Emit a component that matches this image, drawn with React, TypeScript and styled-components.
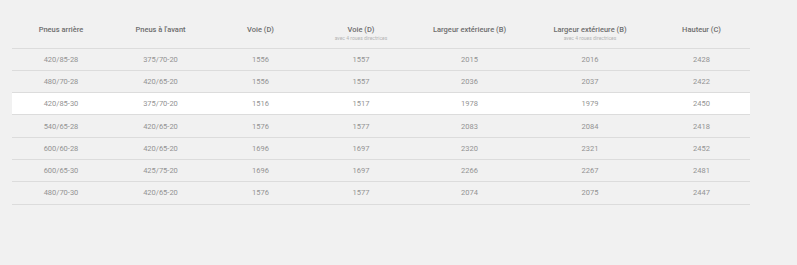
import styled, { createGlobalStyle } from "styled-components";

const GlobalStyle = createGlobalStyle`
  html, body {
    margin: 0;
    background: #f1f1f1;
    font-family: Roboto, "Liberation Sans", Arial, sans-serif;
  }
`;

type Row = string[];

const columns: { title: string; note?: string; width: number }[] = [
  { title: "Pneus arrière", width: 98 },
  { title: "Pneus à l'avant", width: 101 },
  { title: "Voie (D)", width: 99 },
  { title: "Voie (D)", note: "avec 4 roues directrices", width: 102 },
  { title: "Largeur extérieure (B)", width: 115 },
  { title: "Largeur extérieure (B)", note: "avec 4 roues directrices", width: 126 },
  { title: "Hauteur (C)", width: 97 },
];

const rows: Row[] = [
  ["420/85-28", "375/70-20", "1556", "1557", "2015", "2016", "2428"],
  ["480/70-28", "420/65-20", "1556", "1557", "2036", "2037", "2422"],
  ["420/85-30", "375/70-20", "1516", "1517", "1978", "1979", "2450"],
  ["540/65-28", "420/65-20", "1576", "1577", "2083", "2084", "2418"],
  ["600/60-28", "420/65-20", "1696", "1697", "2320", "2321", "2452"],
  ["600/65-30", "425/75-20", "1696", "1697", "2266", "2267", "2481"],
  ["480/70-30", "420/65-20", "1576", "1577", "2074", "2075", "2447"],
];

const App = () => {
  return (
    <>
      <GlobalStyle />
      <Page>
        <Table>
          <colgroup>
            {columns.map((c, i) => (
              <col key={i} style={{ width: c.width }} />
            ))}
          </colgroup>
          <thead>
            <tr>
              {columns.map((c, i) => (
                <Th key={i}>
                  {c.title}
                  {c.note && <Note>{c.note}</Note>}
                </Th>
              ))}
            </tr>
          </thead>
          <tbody>
            {rows.map((r, i) => (
              <Tr key={i} $active={i === 2}>
                {r.map((v, j) => (
                  <Td key={j}>{v}</Td>
                ))}
              </Tr>
            ))}
          </tbody>
        </Table>
      </Page>
    </>
  );
};

export default App;

const Page = styled.div`
  padding: 21px 12px 0 12px;
  height: 265px;
  box-sizing: border-box;
`;

const Table = styled.table`
  width: 738px;
  table-layout: fixed;
  border-collapse: collapse;
`;

const Th = styled.th`
  vertical-align: top;
  text-align: center;
  padding: 4px 0 0 0;
  height: 27px;
  font-size: 7.5px;
  font-weight: 500;
  color: #6e6e6e;
  border-bottom: 1px solid #dcdcdc;
  box-sizing: border-box;
`;

const Note = styled.div`
  font-size: 5px;
  font-weight: 400;
  color: #b4b4b4;
  margin-top: 1px;
`;

const Tr = styled.tr<{ $active?: boolean }>`
  background: ${(p) => (p.$active ? "#ffffff" : "transparent")};
`;

const Td = styled.td`
  text-align: center;
  height: 22.3px;
  padding: 0;
  font-size: 7.5px;
  color: #939393;
  border-bottom: 1px solid #dcdcdc;
  box-sizing: border-box;
`;
